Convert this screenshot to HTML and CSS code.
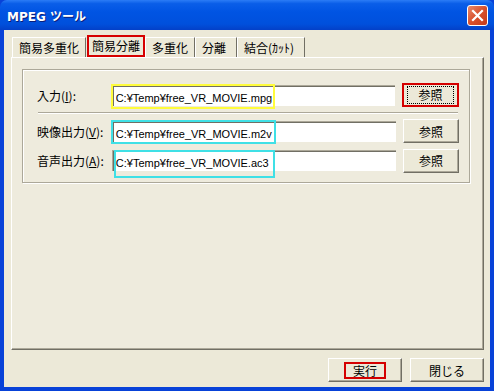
FILE: index.html
```html
<!DOCTYPE html>
<html lang="ja">
<head>
    <meta charset="UTF-8">
    <title>MPEG ツール</title>
    <link rel="stylesheet" href="styles.css">
</head>
<body>
    <!-- Janela principal -->
    <div class="window">
        <div class="titlebar">
            <span class="title">MPEG ツール</span>
            <span class="close-btn">
                <svg width="13" height="13" viewBox="0 0 13 13">
                    <path d="M2 2 L11 11 M11 2 L2 11" stroke="#fff" stroke-width="2.2" stroke-linecap="square"/>
                </svg>
            </span>
        </div>

        <div class="client">
            <!-- Abas -->
            <div class="tabs">
                <div class="tab">簡易多重化</div>
                <div class="tab active">簡易分離</div>
                <div class="tab">多重化</div>
                <div class="tab tab-wide">分離</div>
                <div class="tab tab-wide">結合(ｶｯﾄ)</div>
            </div>

            <div class="panel">
                <div class="group">
                    <div class="row">
                        <label class="label">入力(<u>I</u>):</label>
                        <div class="field">
                            <span class="value">C:¥Temp¥free_VR_MOVIE.mpg</span>
                            <span class="mark mark-yellow"></span>
                        </div>
                        <button class="btn btn-focus" type="button"><span class="focus">参照</span></button>
                    </div>

                    <div class="sep"></div>

                    <div class="row">
                        <label class="label">映像出力(<u>V</u>):</label>
                        <div class="field">
                            <span class="value">C:¥Temp¥free_VR_MOVIE.m2v</span>
                            <span class="mark mark-cyan"></span>
                        </div>
                        <button class="btn" type="button">参照</button>
                    </div>

                    <div class="row row-last">
                        <label class="label">音声出力(<u>A</u>):</label>
                        <div class="field">
                            <span class="value">C:¥Temp¥free_VR_MOVIE.ac3</span>
                            <span class="mark mark-cyan mark-low"></span>
                        </div>
                        <button class="btn" type="button">参照</button>
                    </div>
                </div>
            </div>

            <!-- Botões inferiores -->
            <div class="footer">
                <button class="btn btn-footer" type="button"><span class="red-box">実行</span></button>
                <button class="btn btn-footer btn-close" type="button">閉じる</button>
            </div>
        </div>
    </div>
</body>
</html>
```

FILE: styles.css
```css
/* Página inteira */
body {
    margin: 0;
    width: 494px;
    height: 391px;
    overflow: hidden;
    font-family: "Noto Sans CJK JP", sans-serif;
    font-size: 12px;
    color: #000;
}

/* Moldura azul da janela */
.window {
    width: 494px;
    height: 391px;
    box-sizing: border-box;
    display: flex;
    flex-direction: column;
    background: #0842d8;
    padding: 0 4px 4px 4px;
}

.titlebar {
    height: 30px;
    margin: 0 -4px;
    padding: 0 6px 0 7px;
    display: flex;
    align-items: center;
    justify-content: space-between;
    background: linear-gradient(#2b7cf6 0%, #0a5ee8 12%, #0054e3 40%, #0050dc 80%, #0340c8 100%);
    border-radius: 7px 7px 0 0;
}

.title {
    color: #fff;
    font-family: "DejaVu Sans", "Noto Sans CJK JP", sans-serif;
    font-weight: bold;
    font-size: 12px;
    text-shadow: 1px 1px #0a1e7a;
}

.close-btn {
    width: 19px;
    height: 19px;
    border: 1px solid #fff;
    border-radius: 3px;
    background: linear-gradient(135deg, #e88a6c, #d8502c 50%, #c43a1a);
    display: flex;
    align-items: center;
    justify-content: center;
    margin-top: 1px;
}

/* Área cliente bege */
.client {
    flex: 1;
    background: #ece9d8;
    display: flex;
    flex-direction: column;
    padding: 5px 6px 0 7px;
}

/* Abas */
.tabs {
    display: flex;
    height: 22px;
    padding-left: 1px;
}

.tab {
    height: 20px;
    margin-top: 2px;
    padding: 0 6px;
    line-height: 20px;
    box-sizing: border-box;
    border-left: 1px solid #fff;
    border-right: 1px solid #716f64;
    border-top: 1px solid #fff;
}

.tab.active {
    margin-top: 0;
    height: 22px;
    padding: 0 3px;
    margin-left: 1px;
    border: 2px solid #d60000;
    line-height: 18px;
}

.tab-wide {
    padding-right: 10px;
}

/* Painel da aba */
.panel {
    height: 293px;
    box-sizing: border-box;
    background: #eeebdd;
    border-top: 1px solid #fff;
    border-left: 1px solid #fff;
    border-right: 1px solid #716f64;
    border-bottom: 1px solid #716f64;
    box-shadow: inset -1px -1px #aca899;
    padding: 11px 13px 0 10px;
}

/* Caixa de grupo */
.group {
    height: 99px;
    border: 1px solid #aca899;
    box-shadow: 1px 1px #fff, inset 1px 1px #fff;
    padding: 13px 10px 0 14px;
    display: flex;
    flex-direction: column;
}

.row {
    display: flex;
    align-items: center;
    height: 24px;
}

.row-last {
    margin-top: 5px;
    height: 25px;
}

.label {
    width: 75px;
}

.field {
    position: relative;
    width: 285px;
    height: 21px;
    box-sizing: border-box;
    background: #fff;
    border-top: 1px solid #aca899;
    border-left: 1px solid #aca899;
    box-shadow: inset 1px 1px #716f64;
    padding: 3px 0 0 3px;
    line-height: 16px;
}

.value {
    font-family: "Liberation Sans", "Noto Sans CJK JP", sans-serif;
    font-size: 11px;
}

/* Marcas coloridas de destaque */
.mark {
    position: absolute;
    left: -2px;
    top: -2px;
    width: 160px;
    height: 21px;
    border: 2px solid #fffc3c;
}

.mark-cyan {
    border-color: #3fe0e6;
    width: 161px;
    height: 20px;
}

.mark-low {
    left: 1px;
    top: -1px;
    width: 157px;
    height: 24px;
}

.sep {
    margin: 5px 0 5px 1px;
    height: 1px;
    width: 420px;
    background: #aca899;
    border-bottom: 1px solid #fff;
}

/* Botões estilo clássico */
.btn {
    font-family: "Noto Sans CJK JP", sans-serif;
    font-size: 12px;
    margin-left: 7px;
    width: 56px;
    height: 24px;
    padding: 0;
    background: #ece9d8;
    border: 1px solid;
    border-color: #fff #716f64 #716f64 #fff;
    box-shadow: inset -1px -1px #aca899;
    display: flex;
    align-items: center;
    justify-content: center;
}

.btn-focus {
    border: 2px solid #d40000;
    box-shadow: none;
    width: 57px;
}

.focus {
    border: 1px dotted #000;
    width: 45px;
    height: 16px;
    line-height: 16px;
}

.footer {
    display: flex;
    justify-content: flex-end;
    padding-top: 8px;
}

.btn-footer {
    width: 74px;
    height: 24px;
    margin-left: 8px;
}

.red-box {
    width: 38px;
    height: 13px;
    line-height: 13px;
    border: 2px solid #d40000;
}
```
